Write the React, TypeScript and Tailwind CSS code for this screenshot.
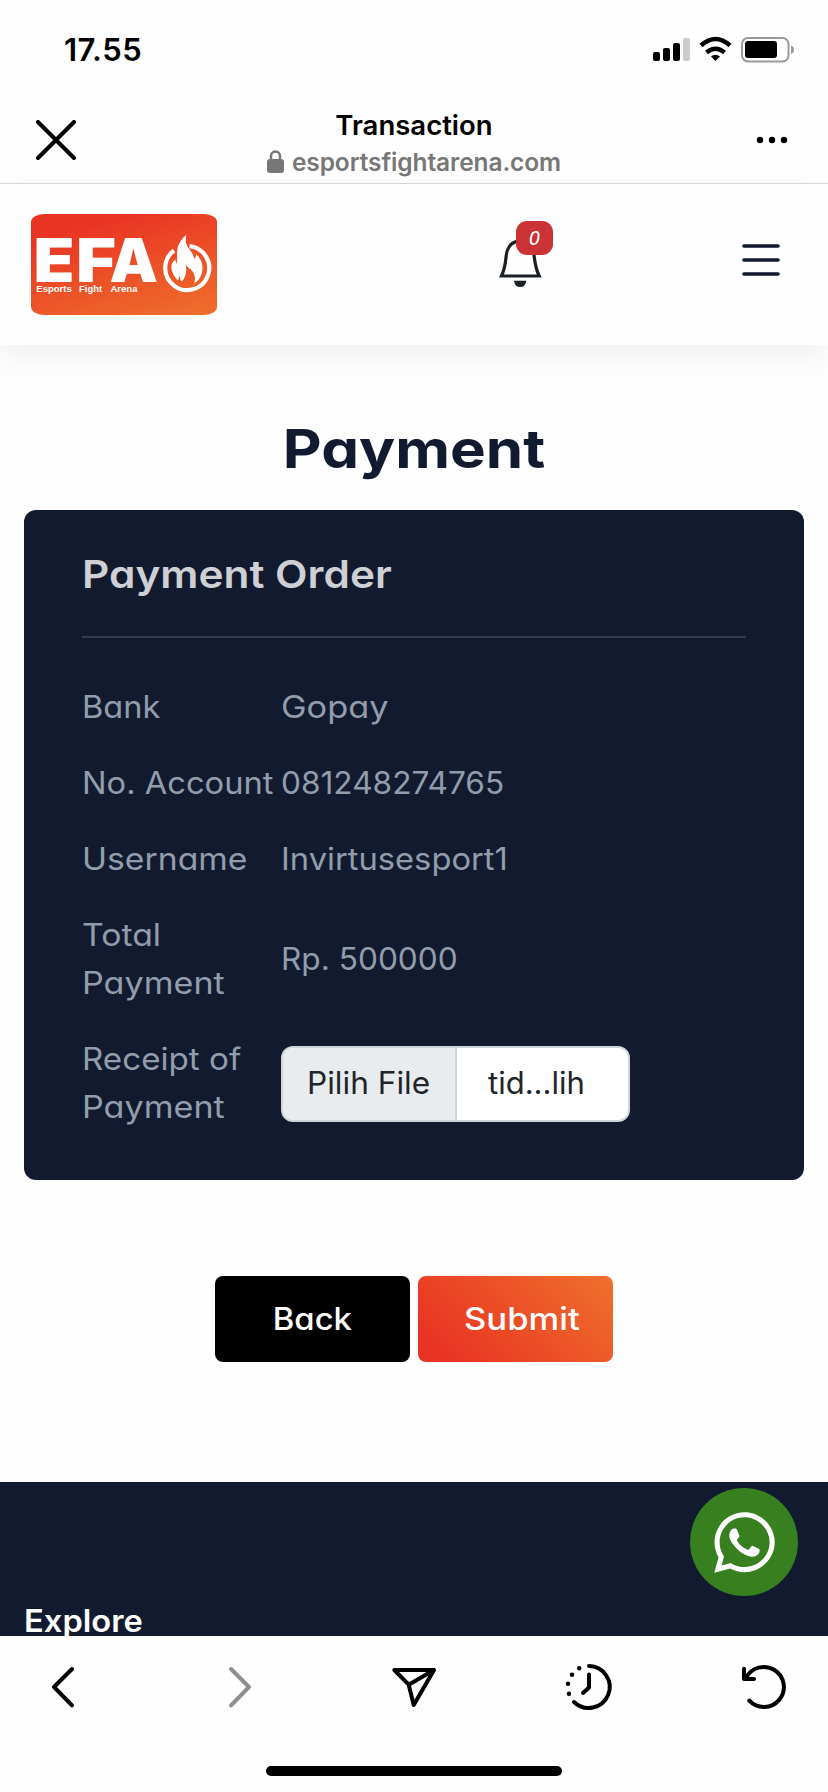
import { FaWhatsapp } from "react-icons/fa";

const rows = [
  { label: "Bank", value: "Gopay", labelScale: "scale-x-[1.05]", valueScale: "scale-x-[1.107]" },
  { label: "No. Account", value: "081248274765", labelScale: "scale-x-[1.053]", valueScale: "scale-x-[1.02]" },
  { label: "Username", value: "Invirtusesport1", labelScale: "scale-x-[1.087]", valueScale: "scale-x-[1.055]" },
];

function StatusBar() {
  return (
    <div className="flex h-[100px] items-start justify-between pl-16 pr-[33px]">
      <span className="pt-[31px] text-[31px] leading-[38px] font-semibold tracking-[0.5px]">17.55</span>
      <svg className="mt-[36px]" width="142" height="27" viewBox="653 36 142 27">
        <rect x="653" y="52" width="7" height="9" rx="2" />
        <rect x="663" y="48" width="7" height="13" rx="2" />
        <rect x="673" y="43" width="7" height="18" rx="2" />
        <rect x="683" y="38" width="7" height="23" rx="2" fill="#cccccc" />
        <path d="M701 45.5Q715.500 32.500 730 45.500M706.500 52.500Q715.500 45 724.500 52.500" fill="none" stroke="#000" strokeWidth="4.500" />
        <path d="M711 56.500Q715.500 53 720 56.500L715.500 61Z" />
        <rect x="742" y="38" width="46.500" height="23.500" rx="6" fill="none" stroke="#999" strokeWidth="2" />
        <rect x="745" y="41" width="32" height="17" rx="3" />
        <path d="M791 45.500a4.500 4.500 0 0 1 0 8.500z" fill="#999" />
      </svg>
    </div>
  );
}

function BrowserBar() {
  return (
    <div className="flex h-[84px] items-center justify-between border-b border-[#d8d8d8] px-9">
      <svg width="40" height="40" viewBox="0 0 40 40" className="mt-[-4px]">
        <path d="M2 2 38 38M38 2 2 38" stroke="#000" strokeWidth="4" strokeLinecap="round" />
      </svg>
      <div className="flex flex-col items-center pt-0.5">
        <span className="text-[27.500px] leading-[38px] font-semibold">Transaction</span>
        <span className="flex items-center gap-2 text-[24.500px] leading-[36px] font-semibold tracking-[-0.1px] text-[#777]">
          <svg width="17" height="23" viewBox="0 0 17 23">
            <rect x="0" y="9" width="17" height="14" rx="3" fill="#777" />
            <path d="M4 10V6a4.500 4.500 0 0 1 9 0v4" fill="none" stroke="#777" strokeWidth="2.500" />
          </svg>
          esportsfightarena.com
        </span>
      </div>
      <svg width="40" height="8" viewBox="0 0 40 8" className="mt-[-4px]">
        <circle cx="8" cy="4" r="3.200" />
        <circle cx="20" cy="4" r="3.200" />
        <circle cx="32" cy="4" r="3.200" />
      </svg>
    </div>
  );
}

function Logo() {
  return (
    <div className="h-[101px] w-[186px] overflow-hidden rounded-[14px/8px] bg-linear-[165deg,#e93323_15%,#ef702c]">
      <svg width="186" height="101" viewBox="31 214 186 101" fill="#fff">
        <g fontSize="60" fontWeight="900" fontFamily="Inter, sans-serif">
          <text x="33.500" y="281.500" textLength="41" lengthAdjust="spacingAndGlyphs">E</text>
          <text x="76" y="281.500" textLength="40" lengthAdjust="spacingAndGlyphs">F</text>
          <text x="109.500" y="281.500" textLength="48.500" lengthAdjust="spacingAndGlyphs">A</text>
        </g>
        <g fontSize="9.500" fontWeight="700" fontFamily="Liberation Sans, sans-serif">
          <text x="36.300" y="292">Esports</text>
          <text x="79" y="292">Fight</text>
          <text x="110.500" y="292">Arena</text>
        </g>
        <path d="M189.500 246.200A22 22 0 1 1 174 250.500" fill="none" stroke="#fff" strokeWidth="4.200" />
        <path d="M186.300 235C185 242 186 245 190 250Q194 255 194.300 259.500Q196 257.500 196.300 254.300C200 258 202.500 262 202.500 268C202.500 275 199 281 194 283.300Q197 276 191 269.500Q186 267 184.300 262Q187 267 186 272Q185.500 278 181.700 281.500Q179.500 279 179.500 275Q179 278 178 280.500C173 276 170 268 172 263.500Q173.500 261 175.500 259.500Q175.500 262 176.500 263.500C178 260 176.500 256 177.300 250C178 244 182 238 186.300 235Z" />
      </svg>
    </div>
  );
}

function SiteHeader() {
  return (
    <header className="flex h-[161px] items-start pt-[30px] pl-[31px] shadow-[0_12px_30px_rgba(0,0,0,0.06)]">
      <Logo />
      <svg width="56" height="68" viewBox="498 220 56 68" className="mt-[6px] ml-[281px]">
        <path d="M501.500 276C507 264 505 256 507.500 250Q511 241 520 241.500Q530 241 533 250C535 256 533.500 264 539.200 276Z" fill="none" stroke="#1b2026" strokeWidth="3.200" />
        <path d="M514 280.700h12.300a6.150 6.300 0 0 1-12.300 0z" fill="#1b2026" />
        <rect x="516" y="221" width="37" height="34" rx="11" fill="#cb3236" />
        <text x="534.300" y="245" fill="#fff" textAnchor="middle" fontSize="20" fontStyle="italic" fontFamily="Noto Sans, sans-serif">0</text>
      </svg>
      <svg width="38" height="32" viewBox="0 0 38 32" className="mt-[30px] ml-[188px]">
        <path d="M2 2H36M2 16H36M2 30H36" stroke="#121a30" strokeWidth="3.600" strokeLinecap="round" />
      </svg>
    </header>
  );
}

export default function App() {
  return (
    <div className="flex h-[1792px] w-[828px] flex-col overflow-hidden bg-[#fefefe] font-['Inter',sans-serif] text-black">
      <StatusBar />
      <BrowserBar />
      <SiteHeader />
      <main className="h-[1137px] px-6 pt-[63px] [font-feature-settings:'cv11']">
        <h1 className="h-[102px] scale-x-[1.112] text-center text-[54px] leading-[81px] font-bold text-[#121a30]">Payment</h1>
        <section className="h-[670px] rounded-xl bg-[#121a30] px-[58px] text-[31px] leading-[48px] text-[#929dab]">
          <h2 className="h-[128px] border-b-2 border-[#303b4b] pt-10 text-[38.500px] font-semibold text-[#cfd0d4]">
            <span className="inline-block origin-left scale-x-[1.1]">Payment Order</span>
          </h2>
          <div className="pt-[31px]">
            {rows.map((r) => (
              <div key={r.label} className="flex h-[76px] items-center">
                <div className="w-[199px] whitespace-nowrap">
                  <span className={`inline-block origin-left ${r.labelScale}`}>{r.label}</span>
                </div>
                <span className={`inline-block origin-left ${r.valueScale}`}>{r.value}</span>
              </div>
            ))}
            <div className="flex h-[124px] items-center">
              <div className="flex w-[199px] flex-col items-start">
                <span className="origin-left scale-x-[1.09]">Total</span>
                <span className="origin-left scale-x-[1.1]">Payment</span>
              </div>
              <span className="origin-left scale-x-[1.02]">Rp. 500000</span>
            </div>
            <div className="flex h-[124px] items-center">
              <div className="flex w-[199px] flex-col items-start">
                <span className="origin-left scale-x-[1.07]">Receipt of</span>
                <span className="origin-left scale-x-[1.1]">Payment</span>
              </div>
              <div className="mt-0.5 flex h-[76px] w-[349px] overflow-hidden rounded-xl border-2 border-[#ced4da] bg-white text-[#212529]">
                <span className="flex w-[174px] items-center border-r-2 border-[#ced4da] bg-[#e9ecef] pb-0.5 pl-6 whitespace-nowrap">
                  <span className="origin-left scale-x-[1.02]">Pilih File</span>
                </span>
                <span className="flex items-center pb-0.5 pl-[31px]">tid...lih</span>
              </div>
            </div>
          </div>
        </section>
        <div className="mt-24 flex justify-center gap-2 text-[31px] font-medium text-white">
          <button className="h-[86px] w-[195px] rounded-lg bg-black">
            <span className="inline-block scale-x-[1.06]">Back</span>
          </button>
          <button className="h-[86px] w-[195px] rounded-lg bg-linear-[45deg,#e93323_10%,#ef702c] pl-[13px]">
            <span className="inline-block scale-x-[1.115]">Submit</span>
          </button>
        </div>
      </main>
      <footer className="flex h-[154px] items-start justify-between overflow-hidden bg-[#121a30] pr-[30px] pl-6 [font-feature-settings:'cv11']">
        <h3 className="origin-left scale-x-[1.055] pt-[119px] text-[31px] leading-[40px] font-semibold text-white">Explore</h3>
        <div className="mt-1.5 flex size-[108px] items-center justify-center rounded-full bg-[#387f20] text-white">
          <FaWhatsapp size={69} />
        </div>
      </footer>
      <nav className="h-[156px]">
        <svg width="828" height="156" viewBox="0 1636 828 156" fill="none" stroke="#000" strokeWidth="4" strokeLinecap="round" strokeLinejoin="round">
          <path d="M72 1669 54 1687l18 18.300" />
          <path d="M231 1669 249 1687l-18 18.300" stroke="#8e8e8e" />
          <path d="M394.300 1670H434L413.700 1705 408.700 1684.700ZM408.700 1684.700 434 1670" />
          <path d="M589 1666a21 21 0 1 1-15 36M589 1674.600V1687.500L583 1693" />
          <path d="M579.300 1668.300h.01M572 1674.700h.01M568 1683.700h.01M569 1693.700h.01" strokeWidth="4.500" />
          <path d="M749.300 1700.700A20 20 0 1 0 746 1678M744 1668.700V1679H754" />
          <path d="M271 1771H557" strokeWidth="10" />
        </svg>
      </nav>
    </div>
  );
}
